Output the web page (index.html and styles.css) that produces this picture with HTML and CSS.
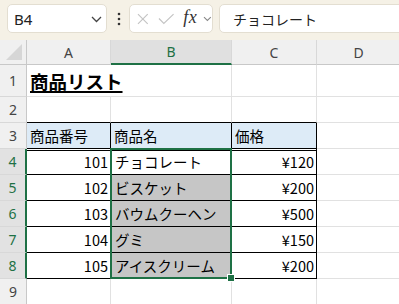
FILE: index.html
```html
<!DOCTYPE html>
<html lang="ja">
<head>
    <meta charset="UTF-8">
    <title>商品リスト</title>
    <link rel="stylesheet" href="styles.css">
</head>
<body>
    <div class="toolbar">
        <div class="namebox">
            <span class="name-text">B4</span>
            <svg class="name-arrow" width="11" height="7" viewBox="0 0 11 7"><path d="M1 1 L5.5 5.5 L10 1" fill="none" stroke="#444" stroke-width="1.3"/></svg>
        </div>
        <div class="dots">
            <svg width="4" height="14" viewBox="0 0 4 14"><circle cx="2" cy="2" r="1.3" fill="#333"/><circle cx="2" cy="7" r="1.3" fill="#333"/><circle cx="2" cy="12" r="1.3" fill="#333"/></svg>
        </div>
        <div class="fxbox">
            <svg class="icon-x" width="12" height="12" viewBox="0 0 12 12"><path d="M1 1 L11 11 M11 1 L1 11" fill="none" stroke="#c4c4c4" stroke-width="1.2"/></svg>
            <svg class="icon-ok" width="17" height="12" viewBox="0 0 17 12"><path d="M1 5.5 L6 10.5 L16 1" fill="none" stroke="#c4c4c4" stroke-width="1.2"/></svg>
            <span class="fx">fx</span>
            <svg class="icon-down" width="9" height="6" viewBox="0 0 9 6"><path d="M1 1 L4.5 4.5 L8 1" fill="none" stroke="#888" stroke-width="1.1"/></svg>
        </div>
        <div class="formula">チョコレート</div>
    </div>

    <div class="sheet">
        <div class="cell corner">
            <svg width="18" height="18" viewBox="0 0 18 18"><path d="M17 1 L17 17 L1 17 Z" fill="#d6d6d6"/></svg>
        </div>
        <div class="cell col">A</div>
        <div class="cell col sel">B</div>
        <div class="cell col">C</div>
        <div class="cell col">D</div>

        <div class="cell row">1</div>
        <div class="cell title-cell"><span class="title">商品リスト</span></div>
        <div class="cell"></div>
        <div class="cell"></div>
        <div class="cell"></div>

        <div class="cell row">2</div>
        <div class="cell top"></div>
        <div class="cell top"></div>
        <div class="cell top"></div>
        <div class="cell"></div>

        <div class="cell row">3</div>
        <div class="cell t th">商品番号</div>
        <div class="cell t th">商品名</div>
        <div class="cell t th">価格</div>
        <div class="cell"></div>

        <div class="cell row sel">4</div>
        <div class="cell t dbl num">101</div>
        <div class="cell t dbl name">チョコレート</div>
        <div class="cell t dbl num">¥120</div>
        <div class="cell"></div>

        <div class="cell row sel">5</div>
        <div class="cell t num">102</div>
        <div class="cell t name hl">ビスケット</div>
        <div class="cell t num">¥200</div>
        <div class="cell"></div>

        <div class="cell row sel">6</div>
        <div class="cell t num">103</div>
        <div class="cell t name hl">バウムクーヘン</div>
        <div class="cell t num">¥500</div>
        <div class="cell"></div>

        <div class="cell row sel">7</div>
        <div class="cell t num">104</div>
        <div class="cell t name hl">グミ</div>
        <div class="cell t num">¥150</div>
        <div class="cell"></div>

        <div class="cell row sel">8</div>
        <div class="cell t num">105</div>
        <div class="cell t name hl">アイスクリーム</div>
        <div class="cell t num">¥200</div>
        <div class="cell"></div>

        <div class="cell row">9</div>
        <div class="cell"></div>
        <div class="cell"></div>
        <div class="cell"></div>
        <div class="cell"></div>

        <!-- selected range B4:B8 -->
        <div class="selection"></div>
        <div class="fill-handle"></div>
    </div>
</body>
</html>
```

FILE: styles.css
```css
* {
    margin: 0;
    padding: 0;
    box-sizing: border-box;
}

body {
    width: 399px;
    height: 304px;
    overflow: hidden;
    background: #fff;
    font-family: "Noto Sans CJK JP", sans-serif;
}

.toolbar {
    height: 40px;
    background: #f5f1e6;
    display: flex;
    align-items: flex-start;
    padding: 4px 0 0 7px;
    overflow: hidden;
}

.namebox,
.fxbox,
.formula {
    height: 29px;
    background: #fff;
    border: 1px solid #e3ded1;
    border-radius: 5px;
    display: flex;
    align-items: center;
}

.namebox {
    width: 100px;
    padding: 0 4px 0 6px;
    justify-content: space-between;
}

.name-text {
    font-family: "Noto Sans", sans-serif;
    font-size: 15px;
    color: #222;
}

.name-arrow {
    margin-top: 1px;
}

.dots {
    width: 22px;
    height: 29px;
    display: flex;
    align-items: center;
    justify-content: center;
    padding-left: 1px;
}

.fxbox {
    width: 84px;
    padding-left: 7px;
}

.icon-x {
    margin-right: 9px;
}

.icon-ok {
    margin-right: 9px;
}

.fx {
    font-family: "Liberation Serif", serif;
    font-style: italic;
    font-size: 18px;
    color: #333;
    margin-top: -3px;
    margin-right: 6px;
    letter-spacing: 0.5px;
}

.formula {
    flex: 1;
    margin-left: 6px;
    margin-right: -10px;
    padding-left: 13px;
    font-size: 14px;
    color: #222;
}

.sheet {
    position: relative;
    display: grid;
    grid-template-columns: 27px 84px 121px 85px 84px;
    grid-template-rows: 25px 32px repeat(8, 26px);
    font-size: 14.5px;
    color: #000;
}

.cell {
    border-right: 1px solid #e1e1e1;
    border-bottom: 1px solid #e1e1e1;
    display: flex;
    align-items: center;
    padding: 0 2px 0 3px;
    white-space: nowrap;
}

.corner,
.col,
.row {
    background: #f0f0f0;
    justify-content: center;
    padding: 0;
    font-family: "Noto Sans", sans-serif;
    font-size: 14px;
    color: #444;
}

.corner {
    justify-content: flex-end;
    align-items: flex-end;
    padding: 0 3px 3px 0;
    border-right: 1px solid #c8c8c8;
    border-bottom: 1px solid #c8c8c8;
}

.col {
    border-right: 1px solid #d8d8d8;
    border-bottom: 1px solid #c8c8c8;
}

.col.sel {
    background: #e0e0e0;
    color: #1e7145;
    border-bottom: 2px solid #1e7145;
}

.row {
    border-right: 1px solid #c8c8c8;
    border-bottom: 1px solid #d8d8d8;
}

.row.sel {
    background: #e2e2e2;
    color: #1e7145;
    border-right: 2px solid #1e7145;
}

.title-cell {
    border-right: none;
    overflow: visible;
}

.title {
    font-size: 18.5px;
    font-weight: bold;
    text-decoration: underline;
    text-decoration-thickness: 2px;
    text-underline-offset: 2px;
    margin-top: 1px;
}

.top {
    border-bottom-color: #000;
}

.t {
    border-right-color: #000;
    border-bottom-color: #000;
}

.th {
    background: #ddebf7;
}

.dbl {
    box-shadow: inset 0 1px 0 #fff, inset 0 2px 0 #000;
}

.num {
    justify-content: flex-end;
}

.name {
    padding-left: 4px;
}

.hl {
    background: #c6c6c6;
}

.selection {
    position: absolute;
    left: 110px;
    top: 108px;
    width: 122px;
    height: 131px;
    border: 2px solid #1e7145;
    pointer-events: none;
}

.fill-handle {
    position: absolute;
    left: 227px;
    top: 234px;
    width: 8px;
    height: 8px;
    background: #1e7145;
    border: 1px solid #fff;
}
```
